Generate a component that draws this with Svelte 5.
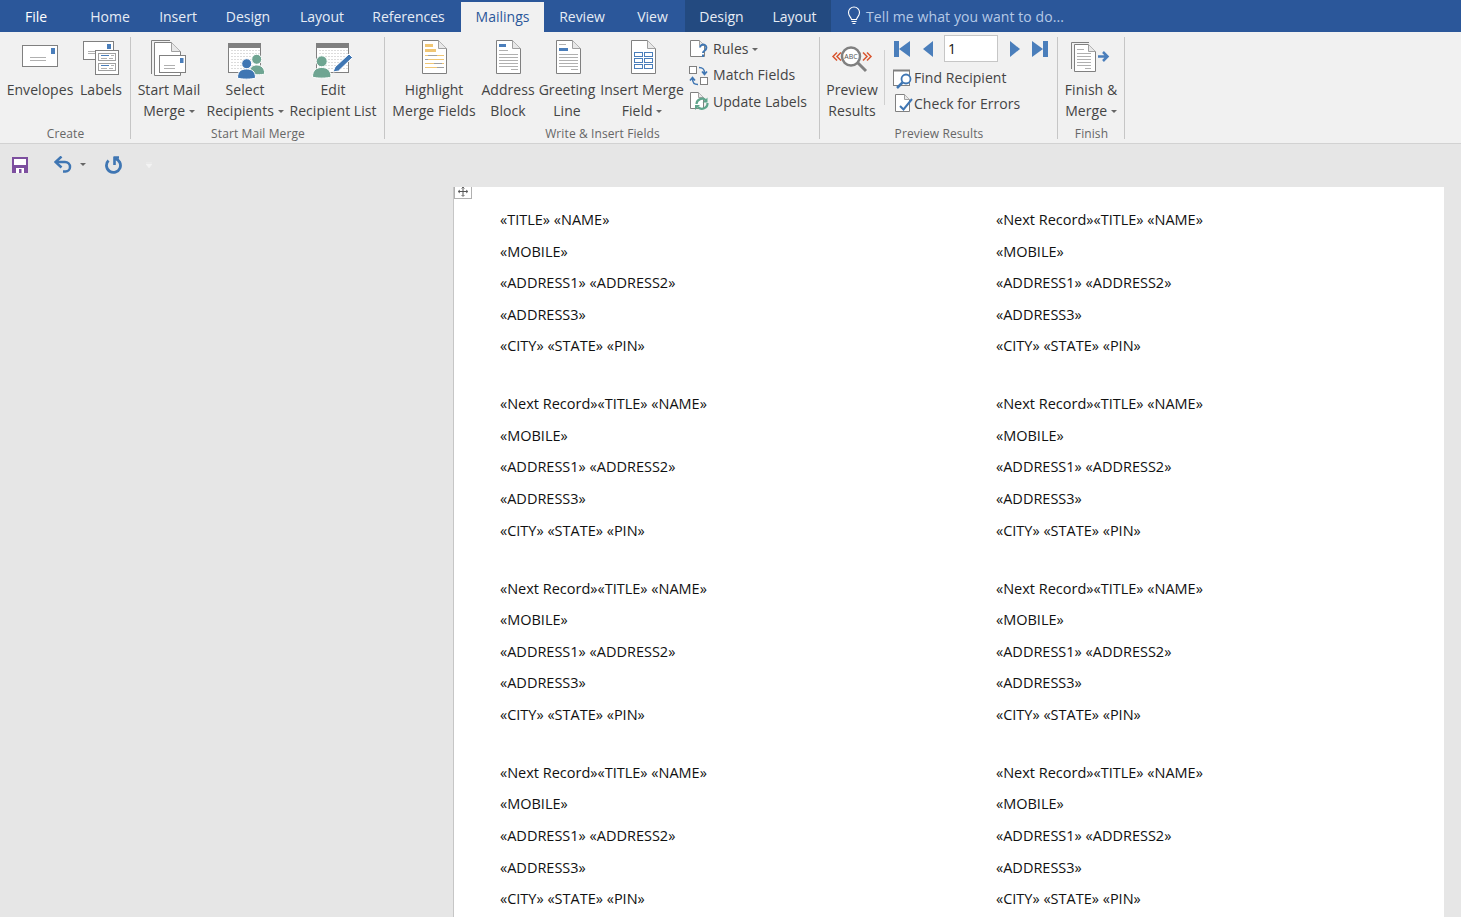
<script>
  const tabs = ['File', 'Home', 'Insert', 'Design', 'Layout', 'References', 'Mailings', 'Review', 'View'];
  const docLines = [0, 1, 2, 3, 4, 5, 6, 7];
  const calDots = [];
  for (let y = 12; y < 33; y += 3) for (let x = 8; x < 36; x += 3) calDots.push([x, y]);
  const bodyLines = [16.5, 19.5, 22.5, 25.5, 28.5];
</script>

{#snippet docPage(x1, x2, top, bottom, fold)}
  <path d="M{x1} {top}H{x2 - fold}L{x2} {top + fold}V{bottom}H{x1}Z" fill="#fff" stroke="#808080" />
  <path d="M{x2 - fold} {top}V{top + fold}H{x2}" fill="#e8e8e8" stroke="#a0a0a0" />
{/snippet}

{#snippet calendar(x)}
  <rect x={x} y="5.5" width="32" height="29" fill="#fff" stroke="#808080" />
  <rect x={x} y="5" width="32.5" height="5" fill="#808080" />
  {#each calDots as d}
    <rect x={d[0] + x - 5} y={d[1]} width="1" height="1" fill="#b8b8b8" />
  {/each}
{/snippet}

<div class="app">
  <header class="tabs">
    {#each tabs as t}
      <div class="tab" class:active={t === 'Mailings'} class:file={t === 'File'}>{t}</div>
    {/each}
    <div class="ctx"><span>Design</span><span>Layout</span></div>
    <div class="tell">
      <svg width="16" height="20" viewBox="0 0 16 20" fill="none" stroke="#fff" stroke-width="1.1">
        <path d="M5.5 13.5C5 11 2.5 10 2.500 6.500a5.500 5.500 0 0 1 11 0C13.500 10 11 11 10.500 13.500Z" />
        <path d="M5.500 15.500h5M6.500 17.500h3" />
      </svg>
      <span>Tell me what you want to do...</span>
    </div>
  </header>

  <section class="ribbon">
    <div class="group create">
      <div class="btns">
        <div class="big">
          <svg viewBox="0 0 44 42" width="44" height="42">
            <rect x="4.500" y="7.500" width="35" height="21" fill="#fff" stroke="#808080" />
            <rect x="33" y="10" width="4" height="6" fill="#4a7ebb" />
            <path d="M12 19.500h16M12 22.500h16" stroke="#b0b0b0" />
          </svg>
          <span>Envelopes</span>
        </div>
        <div class="big">
          <svg viewBox="0 0 44 42" width="44" height="42">
            <rect x="4.500" y="3.500" width="30" height="18" fill="#fff" stroke="#808080" />
            <rect x="28" y="6" width="4" height="5" fill="#4a7ebb" />
            <path d="M9 13.500h7M9 15.500h7" stroke="#b0b0b0" />
            <rect x="16.500" y="12.500" width="23" height="24" fill="#fff" stroke="#808080" />
            <rect x="19.500" y="15.500" width="17" height="7" fill="#fff" stroke="#a0a0a0" />
            <rect x="19.500" y="25.500" width="17" height="7" fill="#fff" stroke="#a0a0a0" />
            <path d="M22 17.500h8M22 27.500h8" stroke="#4a7ebb" />
            <path d="M32 17.500h3M22 20.500h6M30 20.500h4M32 27.500h3M22 30.500h6M30 30.500h4" stroke="#b0b0b0" />
          </svg>
          <span>Labels</span>
        </div>
      </div>
      <div class="label">Create</div>
    </div>

    <div class="group merge">
      <div class="btns">
        <div class="big">
          <svg viewBox="0 0 44 42" width="44" height="42">
            <path d="M4.500 36V2.500H23" fill="none" stroke="#808080" />
            {@render docPage(7.500, 33.500, 4.500, 37.500, 9)}
            <rect x="12.500" y="17.500" width="26" height="17" fill="#fff" stroke="#808080" />
            <rect x="33" y="20" width="3.500" height="5" fill="#4a7ebb" />
            <path d="M17 27.500h11M17 30.500h11" stroke="#b0b0b0" />
          </svg>
          <span>Start Mail<br />Merge <i class="caret"></i></span>
        </div>
        <div class="big">
          <svg viewBox="0 0 44 42" width="44" height="42">
            {@render calendar(5.500)}
            <circle cx="33.700" cy="21.300" r="5" fill="#6fa592" stroke="#fff" />
            <path d="M26 36c0-7 4-9 7.700-9s8 2 8 9c-3 1-12 1-15.700 0Z" fill="#6fa592" stroke="#fff" />
            <circle cx="23.700" cy="25.700" r="5" fill="#3f76b3" stroke="#fff" />
            <path d="M14.500 40c0-7 4-9 9-9s9 2 9 9c-3 1.500-15 1.500-18 0Z" fill="#3f76b3" stroke="#fff" />
          </svg>
          <span>Select<br />Recipients <i class="caret"></i></span>
        </div>
        <div class="big">
          <svg viewBox="0 0 44 42" width="44" height="42">
            {@render calendar(5.500)}
            <circle cx="10.700" cy="23.300" r="5.500" fill="#6fa592" stroke="#fff" />
            <path d="M1.500 39c0-7 4-9.500 9.200-9.500s9.300 2.500 9.300 9.500c-3 1.500-15.500 1.500-18.500 0Z" fill="#6fa592" stroke="#fff" />
            <path d="M22 34l2-5 14-13 3.500 3.500-14 13.500Z" fill="#3f76b3" stroke="#fff" />
          </svg>
          <span>Edit<br />Recipient List</span>
        </div>
      </div>
      <div class="label">Start Mail Merge</div>
    </div>

    <div class="group write">
      <div class="btns">
        <div class="big">
          <svg viewBox="0 0 44 42" width="44" height="42">
            {@render docPage(10.500, 34.500, 2.500, 35.500, 8)}
            <rect x="13" y="6" width="8" height="3" fill="#f0c674" />
            <rect x="13" y="11" width="11" height="3" fill="#f0c674" />
            <path d="M13 17.500h3M25 17.500h7M13 25.500h9M30 25.500h2" stroke="#f0c674" />
            <path d="M16 17.500h9M22 25.500h8" stroke="#a0a0a0" />
            <path d="M13 21.500h3M25 29.500h7" stroke="#a0a0a0" />
            <path d="M16 21.500h16M13 29.500h12" stroke="#f0c674" />
          </svg>
          <span>Highlight<br />Merge Fields</span>
        </div>
        <div class="big">
          <svg viewBox="0 0 44 42" width="44" height="42">
            {@render docPage(10.500, 34.500, 2.500, 35.500, 8)}
            <rect x="13" y="6" width="7" height="3" fill="#4a7ebb" />
            <path d="M13 12.500h9" stroke="#b0b0b0" />
            {#each bodyLines as y}
              <path d="M13 {y}h19" stroke="#b0b0b0" />
            {/each}
            <path d="M25 31.500h7" stroke="#b0b0b0" />
          </svg>
          <span>Address<br />Block</span>
        </div>
        <div class="big">
          <svg viewBox="0 0 44 42" width="44" height="42">
            {@render docPage(11.500, 35.500, 2.500, 35.500, 8)}
            <path d="M14 6.500h7" stroke="#b0b0b0" />
            <rect x="14" y="10" width="9" height="3" fill="#4a7ebb" />
            {#each bodyLines as y}
              <path d="M14 {y}h19" stroke="#b0b0b0" />
            {/each}
            <path d="M26 31.500h7" stroke="#b0b0b0" />
          </svg>
          <span>Greeting<br />Line</span>
        </div>
        <div class="big">
          <svg viewBox="0 0 44 42" width="44" height="42">
            {@render docPage(11.500, 35.500, 2.500, 35.500, 8)}
            <g fill="#fff" stroke="#4a7ebb">
              <rect x="14.500" y="14.500" width="8" height="4" />
              <rect x="24.500" y="14.500" width="8" height="4" />
              <rect x="14.500" y="20.500" width="8" height="4" />
              <rect x="24.500" y="20.500" width="8" height="4" />
              <rect x="14.500" y="26.500" width="8" height="4" />
              <rect x="24.500" y="26.500" width="8" height="4" />
            </g>
          </svg>
          <span>Insert Merge<br />Field <i class="caret"></i></span>
        </div>
      </div>
      <div class="small-col">
        <div class="small">
          <svg viewBox="0 0 24 24" width="24" height="24">
            {@render docPage(3.500, 17.500, 4.500, 20.500, 5)}
            <path d="M13 11.500a3.200 3.200 0 1 1 4.700 3c-1.200.7-1.700 1.200-1.700 2.500" fill="none" stroke="#3f76b3" stroke-width="2" />
            <rect x="15" y="18.500" width="2" height="2.500" fill="#3f76b3" />
          </svg>
          <span>Rules <i class="caret"></i></span>
        </div>
        <div class="small">
          <svg viewBox="0 0 24 24" width="24" height="24">
            <rect x="2.500" y="3.500" width="7" height="7" fill="#fff" stroke="#808080" />
            <rect x="13.500" y="14.500" width="7" height="7" fill="#fff" stroke="#808080" />
            <path d="M12 4.500c4 0 5.500 1.500 5.500 6M15 8.500l2.500 3 2.500-3" fill="none" stroke="#3f76b3" stroke-width="1.600" />
            <path d="M11 21.500c-4 0-5.500-1.500-5.500-6M3 17.500l2.500-3 2.500 3" fill="none" stroke="#3f76b3" stroke-width="1.600" />
          </svg>
          <span>Match Fields</span>
        </div>
        <div class="small">
          <svg viewBox="0 0 24 24" width="24" height="24">
            {@render docPage(3.500, 16.500, 3.500, 19.500, 5)}
            <path d="M9.500 15a5.500 5.500 0 0 1 9.500-3.500M20.500 14a5.500 5.500 0 0 1-9.500 4" fill="none" stroke="#5fa58c" stroke-width="2.200" />
            <path d="M20.500 8.500v5h-5ZM8 21v-5h5Z" fill="#5fa58c" />
          </svg>
          <span>Update Labels</span>
        </div>
      </div>
      <div class="label">Write &amp; Insert Fields</div>
    </div>

    <div class="group preview">
      <div class="btns">
        <div class="big">
          <svg viewBox="0 0 44 42" width="44" height="42">
            <path d="M7 14.500l-4 4 4 4M11 14.500l-4 4 4 4M33 14.500l4 4-4 4M37 14.500l4 4-4 4" fill="none" stroke="#d9552f" stroke-width="1.500" />
            <circle cx="21" cy="18.500" r="9" fill="#fff" stroke="#808080" stroke-width="2.500" />
            <path d="M28 25l8 8" stroke="#808080" stroke-width="3" />
            <text x="21" y="21" class="abc">ABC</text>
          </svg>
          <span>Preview<br />Results</span>
        </div>
        <div class="vsep"></div>
        <div class="nav-col">
          <div class="nav">
            <svg class="nav-wide" viewBox="0 0 16 16" width="16" height="16"><path d="M0 0h5v16H0ZM5 8l11-8v16Z" fill="#4a7ebb" /></svg>
            <svg class="nav-tri" viewBox="0 0 10 16" width="10" height="16"><path d="M10 0v16L0 8Z" fill="#4a7ebb" /></svg>
            <div class="rec">1</div>
            <svg class="nav-tri" viewBox="0 0 10 16" width="10" height="16"><path d="M0 0v16l10-8Z" fill="#4a7ebb" /></svg>
            <svg class="nav-wide" viewBox="0 0 16 16" width="16" height="16"><path d="M16 0h-5v16h5ZM11 8L0 0v16Z" fill="#4a7ebb" /></svg>
          </div>
          <div class="small">
            <svg viewBox="0 0 24 24" width="24" height="24">
              <rect x="3.500" y="4.500" width="16" height="15" fill="#fff" stroke="#808080" />
              <rect x="3" y="3.500" width="17" height="2" fill="#808080" />
              <circle cx="16" cy="13" r="4.500" fill="#fff" stroke="#3f76b3" stroke-width="1.800" />
              <path d="M12.500 16.500L7 22" stroke="#3f76b3" stroke-width="2.500" />
            </svg>
            <span>Find Recipient</span>
          </div>
          <div class="small">
            <svg viewBox="0 0 24 24" width="24" height="24">
              {@render docPage(5.500, 19.500, 3.500, 20.500, 5)}
              <path d="M10 15l3.500 3.500L22 8" fill="none" stroke="#3f76b3" stroke-width="2" />
            </svg>
            <span>Check for Errors</span>
          </div>
        </div>
      </div>
      <div class="label">Preview Results</div>
    </div>

    <div class="group finish">
      <div class="btns">
        <div class="big">
          <svg viewBox="0 0 44 42" width="44" height="42">
            <path d="M2.500 31V4.500H20" fill="none" stroke="#808080" />
            {@render docPage(5.500, 26.500, 6.500, 33.500, 7)}
            <path d="M8 11.500h7M8 15.500h14M8 18.500h14M8 21.500h14M8 24.500h14M8 27.500h14M16 30.500h6" stroke="#b0b0b0" />
            <path d="M29 18.500h9M34 14l4.500 4.500L34 23" fill="none" stroke="#4a7ebb" stroke-width="2.500" />
          </svg>
          <span>Finish &amp;<br />Merge <i class="caret"></i></span>
        </div>
      </div>
      <div class="label">Finish</div>
    </div>
  </section>

  <div class="qat">
    <svg class="save" viewBox="0 0 16 16" width="16" height="16">
      <path d="M0 0h16v16H0Z" fill="#7d4f9f" />
      <rect x="2" y="2" width="12" height="6" fill="#fff" />
      <rect x="4" y="11" width="8" height="5" fill="#fff" />
      <rect x="7" y="12" width="2.500" height="4" fill="#7d4f9f" />
    </svg>
    <svg class="undo" viewBox="0 0 18 18" width="18" height="18">
      <path d="M2 6h9a5 5 0 0 1 5 5v0a4.500 4.500 0 0 1-4.500 4.500H9" fill="none" stroke="#3f76b3" stroke-width="2.500" />
      <path d="M7.500 0.500L1.500 6l6 5.500" fill="none" stroke="#3f76b3" stroke-width="2.500" />
    </svg>
    <i class="caret dark"></i>
    <svg class="redo" viewBox="0 0 18 18" width="18" height="18">
      <path d="M4.500 4.500A7 7 0 1 0 11 2.600" fill="none" stroke="#3f76b3" stroke-width="2.800" />
      <path d="M10.500 0.500V9M10 1.500H15" fill="none" stroke="#3f76b3" stroke-width="2.600" />
    </svg>
    <svg class="more" viewBox="0 0 6 6" width="6" height="6">
      <path d="M0 0h6M0 2h6l-3 4Z" fill="#f3f3f3" stroke="#f3f3f3" stroke-width=".6" />
    </svg>
  </div>

  <main class="canvas">
    <div class="page">
      <div class="move">
        <svg viewBox="0 0 16 11" width="16" height="11">
          <path d="M8 0v9M3.500 4.500h9" stroke="#555" fill="none" />
          <path d="M6.500 1.500L8 0l1.500 1.500M6.500 8L8 9.500 9.500 8M5 3L3 4.500 5 6M11 3l2 1.500L11 6" fill="none" stroke="#555" stroke-width=".8" />
        </svg>
      </div>
      <div class="labels">
        {#each docLines as n}
          <div class="block">
            <p>{n === 0 ? '' : '«Next Record»'}«TITLE» «NAME»</p>
            <p>«MOBILE»</p>
            <p>«ADDRESS1» «ADDRESS2»</p>
            <p>«ADDRESS3»</p>
            <p>«CITY» «STATE» «PIN»</p>
          </div>
        {/each}
      </div>
    </div>
  </main>
</div>

<style>
  :global(body) { margin: 0; overflow: hidden; }
  .app {
    width: 1461px;
    height: 917px;
    overflow: hidden;
    display: flex;
    flex-direction: column;
    background: #e6e6e6;
    font-family: "Open Sans", "Noto Sans", sans-serif;
    color: #444;
  }

  /* tab strip */
  .tabs {
    height: 32px;
    flex: none;
    background: #2b579a;
    display: grid;
    grid-template-columns: 72px 76px 60px 80px 68px 105px 83px 76px 65px 146px 1fr;
    color: #e6ecf5;
    font-size: 14px;
  }
  .tab { display: flex; align-items: center; justify-content: center; }
  .tab.file { color: #fff; padding-top: 1px; }
  .tab.active {
    background: #f1f1f1;
    color: #2b579a;
    margin-top: 2px;
    padding-bottom: 2px;
  }
  .ctx {
    background: #234a80;
    display: grid;
    grid-template-columns: 73px 73px;
  }
  .ctx span { display: flex; align-items: center; justify-content: center; }
  .tell {
    display: flex;
    align-items: center;
    gap: 4px;
    padding-left: 15px;
    color: #b5c9e6;
    letter-spacing: 0.1px;
  }

  /* ribbon */
  .ribbon {
    height: 111px;
    flex: none;
    background: #f1f1f1;
    border-bottom: 1px solid #d2d2d2;
    display: grid;
    grid-template-columns: 131px 254px 435px 238px 67px;
    box-sizing: content-box;
  }
  .group {
    position: relative;
    display: flex;
    height: 111px;
    font-size: 14px;
    letter-spacing: 0.05px;
  }
  .group::after {
    content: "";
    position: absolute;
    right: 0;
    top: 5px;
    bottom: 4px;
    width: 1px;
    background: #c6c6c6;
  }
  .btns { display: grid; height: 90px; padding-top: 6px; box-sizing: border-box; align-content: start; }
  .create .btns { grid-template-columns: 68px 54px; padding-left: 6px; }
  .merge .btns { grid-template-columns: 76px 76px 100px; }
  .write .btns { grid-template-columns: 98px 50px 68px 82px; }
  .preview .btns { grid-template-columns: 64px 2px auto; }
  .finish .btns { grid-template-columns: 66px; }

  .big {
    display: flex;
    flex-direction: column;
    align-items: center;
    text-align: center;
    white-space: nowrap;
    line-height: 21px;
  }
  .big svg { display: block; flex: none; margin-bottom: -1px; }
  .big span { display: block; }

  .caret {
    display: inline-block;
    width: 0;
    height: 0;
    margin-left: 0;
    vertical-align: 3px;
    border-left: 3px solid transparent;
    border-right: 3px solid transparent;
    border-top: 3px solid #666;
  }
  .label {
    position: absolute;
    left: 0;
    right: 0;
    bottom: 1px;
    text-align: center;
    font-size: 12px;
    line-height: 16px;
    color: #666;
    letter-spacing: 0.1px;
  }

  .small-col {
    padding-top: 3px;
    padding-left: 4px;
  }
  .small {
    height: 27px;
    display: flex;
    align-items: center;
    gap: 0;
    white-space: nowrap;
  }
  .small svg { flex: none; }
  .small-col .small { gap: 2px; margin-top: -0.5px; }

  .vsep { width: 1px; height: 55px; margin-top: 12px; background: #d0d0d0; }
  .nav-col { padding-left: 4px; margin-top: -4px; }
  .nav-col .small { margin-top: -2px; height: 27.5px; }
  .nav {
    height: 32px;
    display: flex;
    align-items: center;
    padding-left: 4px;
  }
  .nav-wide { flex: none; margin-top: -3px; }
  .nav-tri { flex: none; margin-left: 13px; margin-top: -3px; }
  .nav .rec + .nav-tri { margin-left: 12px; }
  .nav .rec + .nav-tri + .nav-wide { margin-left: 12px; }
  .rec {
    box-sizing: border-box;
    width: 54px;
    height: 27px;
    margin-left: 11px;
    margin-top: -3px;
    padding-left: 3px;
    background: #fff;
    border: 1px solid #c6c6c6;
    color: #111;
    font-size: 14px;
    line-height: 25px;
  }
  .abc { font-size: 7px; fill: #555; text-anchor: middle; letter-spacing: 0; }

  /* quick access toolbar */
  .qat {
    height: 43px;
    flex: none;
    display: flex;
    align-items: center;
    padding-left: 12px;
    padding-bottom: 2px;
    box-sizing: border-box;
  }
  .save { margin-top: 1px; }
  .undo { margin-left: 26px; margin-top: 1px; }
  .qat .caret.dark { margin-left: 8px; border-top-color: #666; border-left-width: 3.5px; border-right-width: 3.5px; border-top-width: 3.5px; }
  .redo { margin-left: 18px; }
  .more { margin-left: 24px; }

  /* document */
  .canvas { flex: 1; min-height: 0; padding-left: 453px; padding-right: 17px; }
  .page {
    position: relative;
    height: 100%;
    background: #fff;
    border-left: 1px solid #c6c6c6;
    padding: 17px 0 0 46px;
    box-sizing: border-box;
    overflow: hidden;
  }
  .move {
    position: absolute;
    left: 0;
    top: 0;
    width: 16px;
    height: 11px;
    background: #fff;
    border: 1px solid #b0b0b0;
    border-top: none;
    line-height: 0;
  }
  .labels {
    display: grid;
    grid-template-columns: 496px 1fr;
    row-gap: 26.3px;
    font-family: "Open Sans", sans-serif;
    font-size: 14.500px;
    color: #111;
  }
  .block p { margin: 0; height: 31.6px; line-height: 31.6px; white-space: nowrap; }
</style>
